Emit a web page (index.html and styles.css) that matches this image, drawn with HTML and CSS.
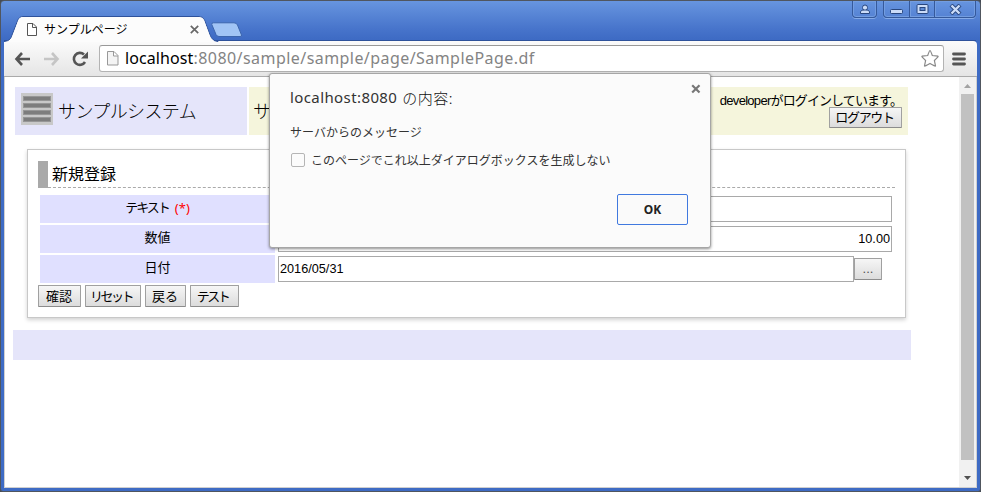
FILE: index.html
```html
<!DOCTYPE html>
<html lang="ja">
<head>
<meta charset="utf-8">
<title>サンプルページ</title>
<link rel="stylesheet" href="styles.css">
</head>
<body>
<div class="window">
  <header class="titlebar">
    <div class="tab">
      <svg class="tab-shape" width="215" height="26" viewBox="0 0 215 26">
        <path d="M0 25.5C6 25 7 22 8 19L13.500 5Q15 .5 19 .5H195Q199 .5 200.500 4L206 19Q208 25 214 25.500V26H0Z" fill="#fcfcfc" stroke="#2e529b"/>
        <path d="M1 26C7 25 8 22 9 19L14 5Q15.500 1 19 1H195Q198 1 200 4L205.500 19Q207.500 25 213 26Z" fill="#fcfcfc"/>
      </svg>
      <svg class="tab-page" width="12" height="15" viewBox="0 0 12 15"><path d="M1.500 1.500H7L10.500 5V13.500H1.500ZM6.500 1.500V5.500H10.500" fill="#fff" stroke="#555"/></svg>
      <span class="tab-title">サンプルページ</span>
      <svg class="tab-close" width="9" height="9" viewBox="0 0 9 9"><path d="M.8.8 8.200 8.200M8.200.8.8 8.200" stroke="#686868" stroke-width="1.700"/></svg>
    </div>
    <svg class="new-tab" width="32" height="16" viewBox="0 0 32 16"><path d="M2.500.8H23Q25.500.8 26.500 3L30.500 13Q31 14.500 29 14.500H8Q6 14.500 5 12.500L.8 2.500Q.5.8 2.500.8Z" fill="#a1c4f5" stroke="#3c65ad"/></svg>
    <div class="controls">
      <span class="control user"><svg width="12" height="11" viewBox="0 0 12 11"><path d="M1.500 9.500V7.500Q3 6 4.500 5.800Q3.500 4.800 3.500 3.500Q3.500 1 6 1T8.500 3.500Q8.500 4.800 7.500 5.800Q9 6 10.500 7.500V9.500Z" fill="#cbdcf8" stroke="#29477f"/><path d="M4 6H8" stroke="#29477f"/></svg></span>
      <div class="control-group">
        <span class="control"><svg width="13" height="11" viewBox="0 0 13 11"><rect x=".5" y="5.500" width="12" height="4" rx="1" fill="#cbdcf8" stroke="#29477f"/></svg></span>
        <span class="control"><svg width="13" height="11" viewBox="0 0 13 11"><rect x="1" y=".5" width="11" height="9" rx="1" fill="#cbdcf8" stroke="#29477f"/><rect x="4" y="3.500" width="5" height="3" fill="#5e8bd6" stroke="#29477f"/></svg></span>
        <span class="control close"><svg width="13" height="11" viewBox="0 0 13 11"><path d="M2 1 11 10M11 1 2 10" stroke="#29477f" stroke-width="4.200"/><path d="M2.500 1.500 10.500 9.500M10.500 1.500 2.500 9.500" stroke="#cbdcf8" stroke-width="2.400"/></svg></span>
      </div>
    </div>
  </header>

  <div class="toolbar">
    <svg class="nav" width="84" height="18" viewBox="0 0 84 18">
      <path d="M8 3 2.500 9 8 15M2.500 9H16" fill="none" stroke="#555" stroke-width="2.600"/>
      <path d="M38 3 43.500 9 38 15M43.500 9H30" fill="none" stroke="#c5c5c5" stroke-width="2.600"/>
      <path d="M71 12A6 6 0 1 1 70 4.500" fill="none" stroke="#555" stroke-width="2.600"/><path d="M74 1.500V8.500H67Z" fill="#555"/>
    </svg>
    <div class="address">
      <svg width="12" height="15" viewBox="0 0 12 15"><path d="M.5.5H7L11 4.500V14H.5ZM6.500.5V5H11" fill="#f4f4f4" stroke="#999"/></svg>
      <span class="url"><b>localhost</b>:8080/sample/sample/page/SamplePage.df</span>
      <svg class="star" width="20" height="19" viewBox="0 0 20 19"><path d="M10 1.500Q10.500 1.500 12.300 6.500L18 7.200Q18.800 7.500 14.400 11.500L15.500 17Q15.300 17.500 10 14.500Q4.700 17.500 4.500 17L5.600 11.500Q1.200 7.500 2 7.200L7.700 6.500Q9.500 1.500 10 1.500Z" fill="#fff" stroke="#888" stroke-width="1.200"/></svg>
    </div>
    <svg class="menu" width="14" height="14" viewBox="0 0 14 14"><path d="M1.500 2H12.500M1.500 7H12.500M1.500 12H12.500" stroke="#555" stroke-width="2.800" stroke-linecap="round"/></svg>
  </div>

  <div class="viewport">
    <main class="page">
      <div class="page-header">
        <div class="brand">
          <span class="burger"><i></i><i></i><i></i><i></i></span>
          <span class="brand-name">サンプルシステム</span>
        </div>
        <div class="banner">
          <span class="banner-name">サ</span>
          <div class="login"><span class="login-text"><span class="login-user">developer</span>がログインしています。</span><button class="logout">ログアウト</button></div>
        </div>
      </div>
      <section class="card">
        <h1><span>新規登録</span></h1>
        <div class="form">
          <div class="label"><span class="l-text">テキスト</span><span class="required">(*)</span></div>
          <div class="field"><div class="input"></div></div>
          <div class="label">数値</div>
          <div class="field"><div class="input number">10.00</div></div>
          <div class="label">日付</div>
          <div class="field"><div class="input date">2016/05/31</div><button class="picker">...</button></div>
        </div>
        <div class="actions">
          <button class="a1">確認</button><button class="a2">リセット</button><button class="a3">戻る</button><button class="a4">テスト</button>
        </div>
      </section>
      <footer class="page-footer"></footer>
    </main>
    <div class="scrollbar">
      <svg width="17" height="17" viewBox="0 0 17 17"><path d="M5 11H12L8.500 7Z" fill="#a3a3a3"/></svg>
      <div class="thumb"></div>
      <svg class="down" width="17" height="17" viewBox="0 0 17 17"><path d="M5 6H12L8.500 10Z" fill="#505050"/></svg>
    </div>
  </div>
</div>

<div class="dialog">
  <svg class="dialog-close" width="10" height="10" viewBox="0 0 10 10"><path d="M1.200 1.200 8.500 8.500M8.500 1.200 1.200 8.500" stroke="#777" stroke-width="2.200"/></svg>
  <h2><span class="host">localhost:8080</span> <span class="host-ja">の内容:</span></h2>
  <p>サーバからのメッセージ</p>
  <div class="suppress"><span class="checkbox"></span><span class="suppress-text">このページでこれ以上ダイアログボックスを生成しない</span></div>
  <button class="ok">OK</button>
</div>
</body>
</html>
```

FILE: styles.css
```css
* { box-sizing: border-box; }
html, body { height: 100%; }
body {
  margin: 0;
  overflow: hidden;
  background: #454b55;
  color: #000;
  font: 13px/16px "Liberation Sans", "Noto Sans CJK JP", sans-serif;
}
button {
  margin: 0;
  padding: 0;
  border: 1px solid #a0a0a0;
  border-bottom-color: #8c8c8c;
  border-radius: 1px;
  background: linear-gradient(#f6f6f6, #dcdcdc);
  color: #000;
  font: inherit;
  white-space: nowrap;
}
svg { display: block; flex: none; }

.window {
  display: flex;
  flex-direction: column;
  width: 981px;
  height: 492px;
  padding: 0 4px 3px 3px;
  border: 1px solid #50565f;
  border-radius: 4px 4px 3px 3px;
  background: linear-gradient(#6795df 0, #4774cb 28px, #3e6bc4 38px, #3e6bc4);
}

.titlebar {
  display: flex;
  flex: none;
  height: 40px;
  border-bottom: 1px solid #2e529b;
}
.tab {
  position: relative;
  display: flex;
  align-items: center;
  width: 209px;
  height: 24px;
  margin-top: 16px;
  padding-left: 22px;
}
.tab-shape { position: absolute; left: 0; top: -1px; }
.tab-page, .tab-title, .tab-close { position: relative; }
.tab-title {
  width: 85px;
  margin-left: 6px;
  font-family: "Noto Sans CJK JP", sans-serif;
  font-size: 12px;
  white-space: nowrap;
}
.tab-close { margin-left: 61px; }
.new-tab { margin-top: 21px; margin-left: -2px; }
.controls { display: flex; margin-left: auto; height: 17px; }
.control { display: flex; align-items: center; justify-content: center; width: 25px; height: 16px; }
.user, .control-group { border: 1px solid #35599b; border-top: 0; border-radius: 0 0 4px 4px; box-shadow: 0 1px #86abe8, inset 0 0 0 1px #739de0; }
.control-group { display: flex; width: 93px; height: 17px; margin-left: 6px; }
.user { height: 17px; width: 25px; }
.control-group .control + .control { border-left: 1px solid #35599b; box-shadow: inset 1px 0 #739de0; }
.control-group .close { flex: 1; }

.toolbar {
  display: flex;
  flex: none;
  align-items: center;
  height: 36px;
  margin-right: -1px;
  padding-left: 10px;
  border-bottom: 1px solid #aaa;
  border-radius: 0 4px 0 0;
  background: linear-gradient(#fbfbfb, #e5e5e5);
}
.address {
  display: flex;
  align-items: center;
  width: 845px;
  height: 27px;
  margin: 0 8px 0 1px;
  padding: 0 3px 0 7px;
  border: 1px solid #b3b3b3;
  border-top-color: #999;
  border-radius: 3px;
  background: #fff;
}
.url {
  margin: -2px 0 0 6px;
  color: #848484;
  font: 16px/22px "Noto Sans", sans-serif;
  letter-spacing: 0.44px;
}
.url b { color: #000; font-weight: 400; letter-spacing: 0.1px; }
.star { margin-left: auto; }

.viewport { display: flex; flex: 1; min-height: 0; margin-right: -1px; border: solid #d0d0d0; border-width: 0 1px 1px; background: #fff; }
.page { flex: 1; padding: 10px 0 0 8px; }
.scrollbar { display: flex; flex-direction: column; width: 17px; background: #f1f1f1; }
.thumb { flex: 1; margin: 0 2px 9px; background: #c1c1c1; }
.down { margin-top: 1px; }

.page-header { display: flex; gap: 2px; width: 893px; height: 48px; margin-left: 2px; }
.brand { display: flex; width: 232px; padding: 6px; background: #e5e5fa; }
.burger { display: flex; flex-direction: column; gap: 2px; width: 32px; height: 32px; padding: 3px 2px; background: #c8c8c8; }
.burger i { flex: 1; border: 1px solid #969696; background: #7d7d7d; }
.brand-name { margin-left: 5px; color: #000; font: 300 18px/34px "Noto Sans CJK JP", sans-serif; letter-spacing: -0.6px; white-space: nowrap; }
.banner { display: flex; flex: 1; justify-content: space-between; padding: 6px 6px 6px 4px; background: #f5f5dc; }
.banner-name { font: 300 18px/34px "Noto Sans CJK JP", sans-serif; }
.login { display: flex; flex-direction: column; align-items: flex-end; }
.login-text { height: 14px; line-height: 16px; letter-spacing: -0.9px; white-space: nowrap; }
.login-user { letter-spacing: -0.7px; }
.logout { width: 73px; height: 21px; padding-right: 2px; letter-spacing: -1.3px; line-height: 17px; }

.card {
  width: 879px;
  height: 169px;
  margin: 14px 0 0 14px;
  padding: 11px 10px 0;
  border: 1px solid #c8c8c8;
  background: #fff;
  box-shadow: 0 2px 4px rgba(0, 0, 0, .18);
}
h1 {
  height: 27px;
  margin: 0;
  border-bottom: 1px dashed #aaa;
  font: 400 16px/24px "Noto Sans CJK JP", sans-serif;
}
h1 span { display: block; width: 120px; height: 27px; padding-left: 4px; border-left: 10px solid #a9a9a9; }
.form { display: grid; grid-template-columns: 235px 617px; grid-auto-rows: 28px; gap: 2px; padding: 7px 0 0 2px; }
.label { display: flex; align-items: center; justify-content: center; padding-bottom: 2px; background: #e0e0ff; }
.l-text { letter-spacing: -2px; }
.required { margin-left: 6px; color: red; font-family: "Noto Sans", sans-serif; }
.field { display: flex; align-items: center; padding-left: 1px; }
.input { width: 614px; height: 26px; padding: 0 1px; border: 1px solid #a9a9a9; font: 12.7px/25px "Liberation Sans", sans-serif; }
.number { text-align: right; }
.date { width: 576px; }
.picker { width: 28px; height: 22px; color: #555; }
.actions { display: flex; gap: 4px; margin-top: 2px; }
.actions button { height: 22px; line-height: 19px; }
.actions .a1, .actions .a3 { padding-right: 1px; }
.actions .a2, .actions .a4 { padding-right: 4px; letter-spacing: -2.5px; }
.a1 { width: 43px; }
.a2 { width: 56px; }
.a3 { width: 41px; }
.a4 { width: 49px; }
.page-footer { width: 898px; height: 30px; margin-top: 12px; background: #e5e5fa; }

.dialog {
  position: absolute;
  left: 269px;
  top: 73px;
  width: 442px;
  height: 175px;
  padding: 14px 20px 0;
  border: 1px solid #a6a6a6;
  border-radius: 3px;
  background: #fbfbfb;
  box-shadow: 0 1px 3px rgba(0, 0, 0, .45);
  color: #333;
  font-family: "Noto Sans CJK JP", sans-serif;
  white-space: nowrap;
}
.dialog-close { position: absolute; right: 9px; top: 10px; }
h2 { display: flex; gap: 5px; height: 20px; margin: 0; font-size: 15px; font-weight: 400; line-height: 19px; }
.host { font-family: "Noto Sans", sans-serif; letter-spacing: 0.4px; }
.host-ja { font-weight: 300; color: #111; letter-spacing: 0.5px; }
.dialog p { margin: 14px 0 0; font-size: 12px; line-height: 20px; }
.suppress { display: flex; align-items: center; margin: 8px 0 0 1px; font-size: 12px; line-height: 20px; }
.checkbox { width: 14px; height: 14px; border: 1px solid #b5b5b5; border-radius: 2px; }
.suppress-text { margin-left: 6px; }
.ok {
  display: block;
  width: 71px;
  height: 31px;
  margin: 24px 2px 0 auto;
  border: 1px solid #4079df;
  border-radius: 2px;
  background: #fafafa;
  color: #222;
  font: 700 12px/28px "Noto Sans", sans-serif;
}
```
